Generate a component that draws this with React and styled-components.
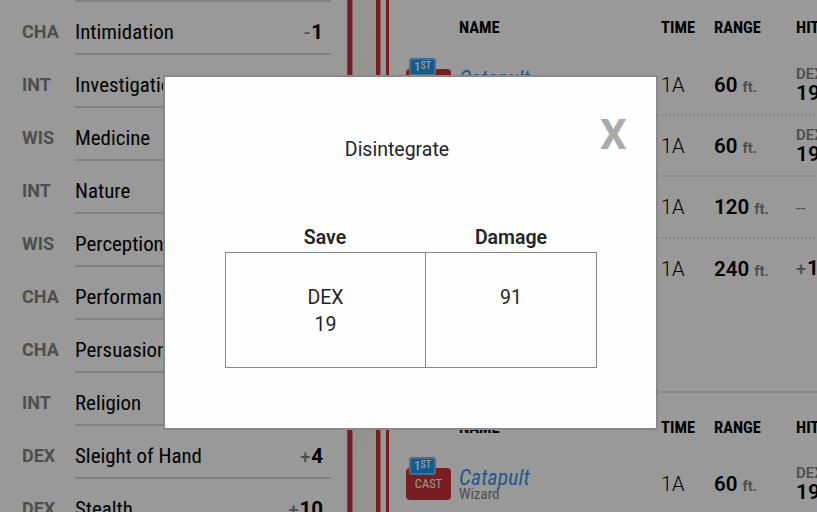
import React from 'react';
import styled, { createGlobalStyle } from 'styled-components';

const GlobalStyle = createGlobalStyle`
  *, *::before, *::after { box-sizing: border-box; }
  html, body, #root { height: 100%; }
  body {
    margin: 0;
    overflow: hidden;
    background: #fff;
    font-family: Roboto, sans-serif;
    color: #000;
  }
`;

const Page = styled.div`
  display: flex;
  width: 817px;
  height: 512px;
  overflow: hidden;
`;

const SkillsPanel = styled.section`
  flex: 0 0 347px;
  padding: 0 16px 0 22px;
`;

const TopRule = styled.div`
  height: 2px;
  margin-left: 53px;
  background: #d8d8d8;
`;

const SkillRow = styled.div`
  display: flex;
  height: 53px;
`;

const Ability = styled.span`
  flex: 0 0 53px;
  padding-top: 4px;
  font-size: 18px;
  font-weight: 700;
  line-height: 52px;
  color: #838383;
`;

const SkillBody = styled.div`
  flex: 1;
  display: flex;
  justify-content: space-between;
  height: 53px;
  padding: 4px 8px 0 0;
  border-bottom: 2px solid #d8d8d8;
  line-height: 53px;
`;

const SkillName = styled.span`
  font-family: 'Roboto Condensed', Roboto, sans-serif;
  font-stretch: 75%;
  font-size: 20.9px;
  white-space: nowrap;
`;

const Modifier = styled.span`
  font-size: 20.5px;
  font-weight: 700;
  white-space: nowrap;
`;

const Sign = styled.span`
  margin-right: 1px;
  font-size: 18px;
  font-weight: 500;
  color: #838383;
`;

const Divider = styled.div`
  flex: 0 0 42px;
  display: flex;
  background: #fff;
`;

const Rule = styled.i`
  flex: 0 0 ${(p) => p.$w}px;
  background: ${(p) => p.$tone};
`;

const SpellPanel = styled.section`
  flex: 0 0 428px;
  overflow: hidden;
`;

const SpellSection = styled.div`
  width: 480px;
  margin-left: 17px;
  height: ${(p) => p.$h}px;
  padding-top: ${(p) => p.$top}px;
  border-bottom: 2px solid #e6e6e6;
`;

const columns = '53px 202px 53px 82px 90px';

const HeaderRow = styled.div`
  display: grid;
  grid-template-columns: ${columns};
  height: 30px;
  line-height: 32px;
  font-family: 'Roboto Condensed', Roboto, sans-serif;
  font-stretch: 75%;
  font-size: 16.5px;
  font-weight: 700;
  margin-bottom: ${(p) => p.$gap}px;
`;

const SpellRow = styled.div`
  display: grid;
  grid-template-columns: ${columns};
  align-items: center;
  height: 61.4px;
  border-bottom: 2px dotted ${(p) => (p.$last ? 'transparent' : '#e0e0e0')};
`;

const CastCell = styled.div`
  display: flex;
  flex-direction: column;
  align-items: flex-start;
  align-self: start;
  padding-top: 3.3px;
`;

const LevelBadge = styled.span`
  position: relative;
  width: 27px;
  height: 18px;
  margin: 0 0 -7px 3px;
  border: 2px solid #7ab8e8;
  border-radius: 3px;
  background: #1b9af0;
  color: #fff;
  text-align: center;
  font-family: 'Roboto Condensed', Roboto, sans-serif;
  font-stretch: 75%;
  font-size: 13px;
  font-weight: 500;
  line-height: 14px;
  sup { font-size: 10px; line-height: 0; vertical-align: 2px; }
`;

const CastButton = styled.button`
  width: 45px;
  height: 32px;
  padding: 0;
  border: 0;
  border-radius: 4px;
  background: #c93336;
  color: #fff;
  font-family: 'Roboto Condensed', Roboto, sans-serif;
  font-stretch: 75%;
  font-size: 12.5px;
`;

const NameCell = styled.div`
  align-self: start;
  padding-top: 14px;
  font-family: 'Roboto Condensed', Roboto, sans-serif;
  font-stretch: 75%;
`;

const SpellName = styled.div`
  font-size: 21.5px;
  font-style: italic;
  line-height: 19px;
  letter-spacing: 0.2px;
  color: #3b93e8;
`;

const SpellClass = styled.div`
  font-size: 15px;
  line-height: 15px;
  color: #838383;
`;

const Time = styled.span`
  padding-top: 1px;
  font-size: 20px;
  font-weight: 350;
`;

const Range = styled.span`
  padding-top: 1px;
  font-size: 20.5px;
  font-weight: 650;
  white-space: nowrap;
  small { margin-left: 5px; font-size: 15px; color: #838383; }
`;

const Hit = styled.div`
  font-size: 21px;
  font-weight: 650;
  line-height: 20px;
  white-space: nowrap;
  small { display: block; font-size: 15px; line-height: 17px; color: #838383; font-stretch: 90%; }
`;

const Empty = styled.span`
  padding-top: 2px;
  font-size: 17px;
  color: #838383;
`;

const Overlay = styled.div`
  position: fixed;
  inset: 0;
  z-index: 10;
  padding: 75px 0 0 163px;
  background: rgba(0, 0, 0, 0.4);
`;

const Dialog = styled.div`
  display: grid;
  grid-template-rows: 144px 1fr;
  width: 495px;
  height: 355px;
  padding-left: 60px;
  border: 2px solid #888;
  background: #fefefe;
  color: #242528;
`;

const DialogHeader = styled.header`
  display: grid;
  grid-template-columns: 344px 1fr;
`;

const Title = styled.h2`
  margin: 0;
  padding-top: 59px;
  text-align: center;
  font-size: 19.5px;
  font-weight: 400;
  line-height: 28px;
`;

const Close = styled.button`
  justify-self: start;
  align-self: start;
  margin: 32px 0 0 31px;
  padding: 0;
  border: 0;
  background: none;
  color: #aaa;
  font-family: Roboto, sans-serif;
  font-size: 42px;
  font-weight: 700;
  line-height: 52px;
`;

const Results = styled.div`
  display: grid;
  grid-template-columns: 200px 172px;
  grid-template-rows: 31px 116px;
  text-align: center;
  font-size: 19.5px;
  line-height: 27px;
`;

const Label = styled.div`
  font-weight: 600;
  line-height: 33px;
`;

const Value = styled.div`
  padding-top: 30.5px;
  border: 1px solid #87888a;
  ${(p) => !p.$joined && 'border-right: 0;'}
`;

const skills = [
  ['CHA', 'Intimidation', '-', '1'],
  ['INT', 'Investigation', '+', '3'],
  ['WIS', 'Medicine', '+', '1'],
  ['INT', 'Nature', '+', '3'],
  ['WIS', 'Perception', '+', '1'],
  ['CHA', 'Performance', '-', '1'],
  ['CHA', 'Persuasion', '-', '1'],
  ['INT', 'Religion', '+', '3'],
  ['DEX', 'Sleight of Hand', '+', '4'],
  ['DEX', 'Stealth', '+', '10'],
];

function Headings({ gap }) {
  return (
    <HeaderRow $gap={gap}>
      <span /><span>NAME</span><span>TIME</span><span>RANGE</span><span>HIT / DC</span>
    </HeaderRow>
  );
}

function Spell({ range, children, named, last }) {
  return (
    <SpellRow $last={last}>
      {named ? (
        <>
          <CastCell>
            <LevelBadge>1<sup>ST</sup></LevelBadge>
            <CastButton>CAST</CastButton>
          </CastCell>
          <NameCell>
            <SpellName>Catapult</SpellName>
            <SpellClass>Wizard</SpellClass>
          </NameCell>
        </>
      ) : <><span /><span /></>}
      <Time>1A</Time>
      <Range>{range}<small>ft.</small></Range>
      {children}
    </SpellRow>
  );
}

const DexSave = () => <Hit><small>DEX</small>19</Hit>;

export default function App() {
  return (
    <>
      <GlobalStyle />
      <Page>
        <SkillsPanel>
          <TopRule />
          {skills.map(([ability, name, sign, value]) => (
            <SkillRow key={name}>
              <Ability>{ability}</Ability>
              <SkillBody>
                <SkillName>{name}</SkillName>
                <Modifier><Sign>{sign}</Sign>{value}</Modifier>
              </SkillBody>
            </SkillRow>
          ))}
        </SkillsPanel>
        <Divider>
          <Rule $w={1} $tone="#d66a6b" />
          <Rule $w={4} $tone="#c93336" />
          <Rule $w={1} $tone="#dba3a2" />
          <Rule $w={23} $tone="linear-gradient(115deg, #fbfaf5, #f1f0e8 55%, #f8f7f1)" />
          <Rule $w={4} $tone="#c93336" />
          <Rule $w={1} $tone="#e3b0af" />
          <Rule $w={5} $tone="#fff" />
          <Rule $w={3} $tone="#c93336" />
        </Divider>
        <SpellPanel>
          <SpellSection $h={393} $top={12}>
            <Headings gap={12.5} />
            <Spell range="60" named><DexSave /></Spell>
            <Spell range="60"><DexSave /></Spell>
            <Spell range="120"><Empty>--</Empty></Spell>
            <Spell range="240" last><Hit><Sign>+</Sign>11</Hit></Spell>
          </SpellSection>
          <SpellSection $h={200} $top={19}>
            <Headings gap={11.5} />
            <Spell range="60" named><DexSave /></Spell>
          </SpellSection>
        </SpellPanel>
      </Page>
      <Overlay>
        <Dialog role="dialog" aria-label="Disintegrate">
          <DialogHeader>
            <Title>Disintegrate</Title>
            <Close>X</Close>
          </DialogHeader>
          <Results>
            <Label>Save</Label>
            <Label>Damage</Label>
            <Value>DEX<br />19</Value>
            <Value $joined>91</Value>
          </Results>
        </Dialog>
      </Overlay>
    </>
  );
}
